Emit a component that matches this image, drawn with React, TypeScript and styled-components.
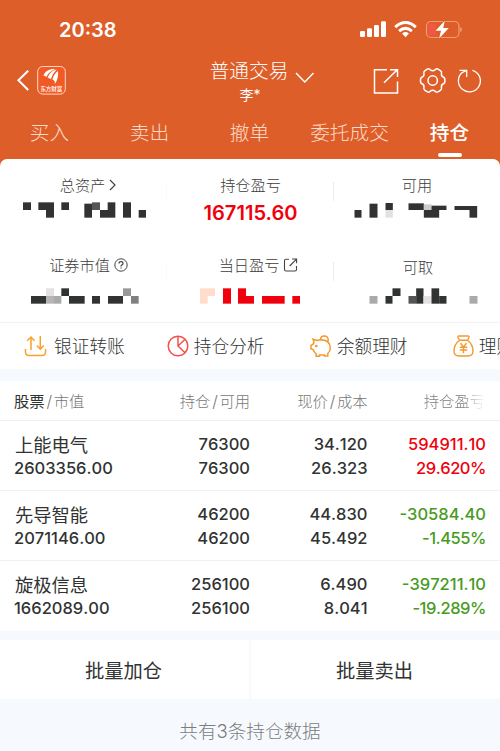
import React from "react";
import styled, { createGlobalStyle } from "styled-components";

const ORANGE = "#de5e29";
const INK = "#303332";
const RED = "#f0000c";
const GREEN = "#479b22";

const Global = createGlobalStyle`
  * { box-sizing: border-box; }
  body { margin: 0; background: #f6faff; }
`;

const Screen = styled.div`
  width: 500px;
  height: 751px;
  overflow: hidden;
  display: flex;
  flex-direction: column;
  background: #f6faff;
  color: ${INK};
  font-family: Inter, "Noto Sans CJK SC", sans-serif;
  white-space: nowrap;
`;

const Header = styled.header`
  height: 159px;
  flex: none;
  background: ${ORANGE};
  color: #fff;
`;

const StatusBar = styled.div`
  height: 60px;
  padding: 0 38px 0 59px;
  display: flex;
  justify-content: space-between;
`;

const Clock = styled.div`
  margin-top: 18px;
  font-size: 20px;
  line-height: 24px;
  font-weight: 600;
`;

const StatusIcons = styled.svg`
  width: 103px;
  height: 20px;
  margin-top: 19px;
`;

const NavBar = styled.div`
  height: 50px;
  display: grid;
  grid-template-columns: 167px 1fr 167px;
`;

const NavLeft = styled.div`
  padding: 6px 0 0 16px;
  display: flex;
  align-items: flex-start;
`;

const BackIcon = styled.svg`
  width: 14px;
  height: 22px;
  margin-top: 4px;
`;

const Logo = styled.svg`
  width: 30px;
  height: 30px;
  margin-left: 7px;
`;

const NavTitle = styled.div`
  display: flex;
  flex-direction: column;
  align-items: center;
`;

const TitleRow = styled.div`
  display: flex;
  align-items: center;
  gap: 7px;
  height: 24px;
  line-height: 26px;
  padding-left: 25px;
  font-size: 19.7px;
  font-weight: 300;
`;

const TitleText = styled.span`
  height: 28px;
`;

const TitleArrow = styled.svg`
  width: 20px;
  height: 14px;
  margin-top: 10px;
`;

const Subtitle = styled.div`
  font-size: 14px;
  line-height: 20px;
  margin-top: 1px;
`;

const Tabs = styled.nav`
  height: 49px;
  display: grid;
  grid-template-columns: repeat(5, 100px);
`;

const Tab = styled.div<{ $active?: boolean }>`
  display: flex;
  flex-direction: column;
  align-items: center;
  justify-content: space-between;
  padding: 8px 0 2px;
  font-size: 19.7px;
  line-height: 30px;
  font-weight: ${(p) => (p.$active ? 500 : 300)};
  color: ${(p) => (p.$active ? "#fff" : "#fbdac6")};
`;

const TabLabel = styled.span`
  padding-right: 1px;
`;

const TabMark = styled.span`
  width: 24px;
  height: 4px;
  border-radius: 2px;
  background: #fff;
`;

const HeaderIcons = styled.svg`
  width: 120px;
  height: 30px;
  margin: 6px 0 0 36px;
`;

const Panel = styled.section`
  height: 210px;
  flex: none;
  background: linear-gradient(${ORANGE} 0 12px, #fff 12px);
`;

const PanelBody = styled.div`
  height: 100%;
  background: #fff;
  border-radius: 7px 7px 0 0;
`;

const Summary = styled.div`
  height: 163px;
  display: grid;
  grid-template-columns: 167px 167px 166px;
  grid-template-rows: 80px 83px;
`;

const Metric = styled.div<{ $rule?: string; $drop?: number }>`
  display: flex;
  flex-direction: column;
  align-items: center;
  padding-top: ${(p) => 13 + (p.$drop ?? 0)}px;
  background: linear-gradient(${(p) => p.$rule ?? "transparent"} 0 0) right 23px / 1px 19px no-repeat;
`;

const MetricLabel = styled.div<{ $indent?: number }>`
  display: flex;
  align-items: center;
  gap: 4px;
  height: 24px;
  padding-left: ${(p) => p.$indent ?? 0}px;
  font-size: 15.2px;
  font-weight: 300;
  color: #3c3c3c;
`;

const MetricValue = styled.div`
  font-size: 20.1px;
  line-height: 24px;
  font-weight: 600;
  margin-top: 5px;
  color: ${RED};
`;

const MosaicSvg = styled.svg<{ $top: number }>`
  width: 167px;
  height: 16px;
  flex: none;
  margin-top: ${(p) => p.$top}px;
`;

const Actions = styled.div`
  height: 47px;
  border-top: 1px solid #f3f3f5;
  display: grid;
  grid-template-columns: 143.3px 143px 143px 143px;
  overflow: hidden;
`;

const Action = styled.div<{ $gap?: number }>`
  display: flex;
  align-items: center;
  gap: ${(p) => p.$gap ?? 4.5}px;
  padding-left: 24px;
  font-size: 17.7px;
  font-weight: 300;
`;

const ActionLabel = styled.span`
  padding-bottom: 3px;
`;

const Icon = styled.svg<{ $w: number; $h: number }>`
  width: ${(p) => p.$w}px;
  height: ${(p) => p.$h}px;
  flex: none;
`;

/* Label-sized glyphs sit slightly below the centre of the text line. */
const LabelIcon = styled(Icon)`
  margin-top: 1px;
`;

const Table = styled.section`
  margin-top: 12px;
  height: 250px;
  flex: none;
  background: #fff;
`;

const columns = `
  display: grid;
  grid-template-columns: 130px 106px 117.5px 118.5px;
  padding: 0 14px;
`;

const TableHead = styled.div`
  ${columns}
  height: 40px;
  align-items: center;
  padding-bottom: 2px;
  border-bottom: 1px solid #f6eaec;
  font-size: 15.3px;
  font-weight: 300;
  color: #777;
`;

const HeadCell = styled.div<{ $left?: boolean; $fade?: boolean }>`
  text-align: ${(p) => (p.$left ? "left" : "right")};
  ${(p) =>
    p.$fade &&
    `padding-right: 1px;
     background: linear-gradient(90deg, #777 80%, #f4f4f4 98%);
     background-clip: text; -webkit-background-clip: text; color: transparent;`}
`;

const Strong = styled.span`
  font-weight: 400;
  color: ${INK};
`;

const Slash = styled.span`
  margin: 0 1.5px 0 2px;
  font-size: 16px;
`;

const Row = styled.div`
  ${columns}
  height: 70px;
  padding-top: 11px;
  border-bottom: 1px solid #f6f0f2;
  &:last-child { border-bottom: 0; }
`;

const Cell = styled.div<{ $tone?: string }>`
  display: flex;
  flex-direction: column;
  align-items: flex-end;
  font-size: 16.5px;
  line-height: 24px;
  font-weight: 500;
  font-kerning: none;
  color: ${(p) => p.$tone ?? INK};
`;

const Rate = styled.span`
  letter-spacing: -0.45px;
`;

const StockCell = styled(Cell)`
  align-items: flex-start;
`;

const StockName = styled.span`
  height: 24px;
  padding-left: 1px;
  font-size: 18.3px;
  line-height: 26px;
  font-weight: 400;
`;

const Batch = styled.div`
  margin-top: 9px;
  height: 59px;
  flex: none;
  display: grid;
  grid-template-columns: 1fr 1fr;
  gap: 2px;
`;

const BatchButton = styled.button`
  border: 0;
  padding: 2px 2px 0 0;
  background: #fff;
  font: 400 19.3px/28px Inter, "Noto Sans CJK SC", sans-serif;
  color: ${INK};
`;

const Footer = styled.footer`
  padding-top: 18px;
  text-align: center;
  font-size: 18.6px;
  line-height: 28px;
  font-weight: 300;
  color: #7c7c7c;
`;

type Block = [x: number, y: number, w: number, h: number, fill?: string];

/* Masked amounts: blocks are given in thirds of a pixel. */
const Mosaic = ({ x, top, blocks }: { x: number; top: number; blocks: Block[] }) => (
  <MosaicSvg $top={top} viewBox={`${x} 0 501 48`}>
    {blocks.map(([bx, by, w, h, fill], i) => (
      <rect key={i} x={bx} y={by} width={w} height={h} fill={fill ?? INK} />
    ))}
  </MosaicSvg>
);

const PALE = "#e4e0e4";
const PEACH = "#ffdccb";

const assets: Block[] = [
  [69, 1, 24, 23], [115, 1, 47, 23], [138, 24, 24, 23], [184, 1, 23, 23],
  [253, 5, 23, 42], [276, 1, 24, 23, "#555"], [300, 24, 46, 23], [323, 1, 23, 23],
  [369, 1, 24, 46], [416, 24, 22, 23],
];
const available: Block[] = [
  [1062, 24, 21, 23], [1107, 5, 24, 42], [1155, 3, 22, 21], [1155, 24, 22, 23, PALE],
  [1224, 4, 46, 20], [1270, 7, 23, 17, "#ccc"], [1270, 24, 46, 23], [1293, 11, 45, 13],
  [1362, 12, 68, 12], [1407, 24, 23, 23],
];
const market: Block[] = [
  [93, 24, 45, 23], [138, 1, 24, 23, PALE], [138, 24, 24, 23, "#b5b5b5"], [162, 24, 22, 23, "#aaa8aa"],
  [184, 1, 23, 23], [207, 24, 47, 23], [276, 24, 24, 23], [324, 24, 45, 23],
  [369, 1, 24, 23, "#999"], [393, 24, 23, 23, "#808080"],
];
const today: Block[] = [
  [600, 1, 45, 23, PEACH], [600, 24, 23, 23, PEACH], [669, 1, 24, 46, RED], [714, 1, 24, 46, RED],
  [738, 24, 24, 23, RED], [786, 24, 68, 23, RED], [877, 24, 23, 23, RED],
];
const drawable: Block[] = [
  [1107, 24, 24, 23, "#aaa"], [1155, 24, 21, 23], [1176, 1, 24, 23], [1224, 24, 23, 23, "#555"],
  [1247, 1, 22, 46], [1269, 24, 24, 23, PALE], [1293, 1, 23, 46], [1316, 24, 22, 23],
  [1407, 24, 24, 23, "#aaa"],
];

const holdings = [
  { name: "上能电气", value: "2603356.00", held: "76300", usable: "76300", price: "34.120", cost: "26.323", profit: "594911.10", rate: "29.620%", tone: RED },
  { name: "先导智能", value: "2071146.00", held: "46200", usable: "46200", price: "44.830", cost: "45.492", profit: "-30584.40", rate: "-1.455%", tone: GREEN },
  { name: "旋极信息", value: "1662089.00", held: "256100", usable: "256100", price: "6.490", cost: "8.041", profit: "-397211.10", rate: "-19.289%", tone: GREEN },
];

const LogoText = styled.text`
  font: 500 5.6px "Noto Sans CJK SC", sans-serif;
  fill: #fff;
`;

export default function App() {
  return (
    <Screen>
      <Global />
      <Header>
        <StatusBar>
          <Clock>20:38</Clock>
          <StatusIcons viewBox="359 19 103 20" fill="#fff">
            <rect x="360" y="31" width="5" height="6" rx="1.3" />
            <rect x="367" y="28.3" width="5" height="8.7" rx="1.3" />
            <rect x="374" y="25" width="5" height="12" rx="1.3" />
            <rect x="381" y="21.3" width="5" height="15.7" rx="1.3" />
            <g fill="none" stroke="#fff" strokeWidth="3">
              <path d="M395.2 27.2Q405.5 17.9 415.8 27.2" />
              <path d="M399.1 31.1Q405.5 25.6 411.9 31.1" />
            </g>
            <path d="M402.1 33.5Q405.5 30.6 408.9 33.5L405.5 37.2Z" />
            <rect x="426.5" y="21.5" width="32.5" height="16" rx="4.5" fill="none" stroke="#ee9d79" strokeWidth="1.2" />
            <path d="M460.3 27v5q1.5-.7 1.5-2.5t-1.5-2.5Z" fill="#efa98b" />
            <rect x="428" y="23.5" width="8" height="12" rx="2" fill="#f25746" />
            <path d="M444.8 20.7L435.5 30.8H441L439.1 38.5L448.8 28.1H443.2Z" stroke={ORANGE} strokeWidth="1.5" paintOrder="stroke" />
          </StatusIcons>
        </StatusBar>
        <NavBar>
          <NavLeft>
            <BackIcon viewBox="16 70 14 22" fill="none" stroke="#fff" strokeWidth="2">
              <path d="M28.2 70.7L18.4 80.3L28.2 90" />
            </BackIcon>
            <Logo viewBox="37 66 30 30">
              <rect x="37.7" y="66.5" width="27.6" height="27.6" rx="5" fill="#f25a25" stroke="#ffd8c5" />
              <path d="M43.5 75.5C45 70.8 50 68.6 55.2 69.1C51 70.8 48.2 73.4 46.5 76.7ZM47.7 77.8C49.2 73.5 52.3 70.3 56.8 69.5C54.3 72.2 52.1 75.2 51 78.9ZM52.4 79.6C53.5 75.7 55.4 72.6 58 71C58.6 75.8 57.5 80.5 54.7 84.2C55.2 81.8 54.7 80.3 52.4 79.6Z" fill="#fff" />
              <LogoText x="40.4" y="91" textLength="22">东方财富</LogoText>
            </Logo>
          </NavLeft>
          <NavTitle>
            <TitleRow>
              <TitleText>普通交易</TitleText>
              <TitleArrow viewBox="0 0 20 14" fill="none" stroke="#fff" strokeWidth="1.5">
                <path d="M1 3L9.8 12L18.5 3" />
              </TitleArrow>
            </TitleRow>
            <Subtitle>李*</Subtitle>
          </NavTitle>
          <HeaderIcons viewBox="369 66 120 30" fill="none" stroke="#fff" strokeWidth="1.5">
            <path d="M387 69.7H374.5V93H397.5V81.5M390 69.7H397.5V77M384 82.8L397 70" />
            <circle cx="432.7" cy="80.5" r="4.7" />
            <path d="M426.5 69.7Q428.5 67.9 430.3 69.8Q432.7 71.6 435.1 69.8Q436.9 67.9 438.9 69.7L440.7 70.8Q442 71.6 441.4 74Q441.3 76.4 443.5 77.2Q445 77.7 444.9 80.5Q445 83.3 443.5 83.8Q441.3 84.6 441.4 87Q442 89.4 440.7 90.2L438.9 91.3Q436.9 93.1 435.1 91.2Q432.7 89.4 430.3 91.2Q428.5 93.1 426.5 91.3L424.7 90.2Q423.4 89.4 424 87Q424.1 84.6 421.9 83.8Q420.4 83.3 420.5 80.5Q420.4 77.7 421.9 77.2Q424.1 76.4 424 74Q423.4 71.6 424.7 70.8Z" />
            <path d="M472.4 70.3A11 11 0 1 1 462.5 72.3L466.5 70.5M459.5 70.3H466.7V77" strokeWidth="1.3" />
          </HeaderIcons>
        </NavBar>
        <Tabs>
          <Tab><TabLabel>买入</TabLabel></Tab>
          <Tab><TabLabel>卖出</TabLabel></Tab>
          <Tab><TabLabel>撤单</TabLabel></Tab>
          <Tab><TabLabel>委托成交</TabLabel></Tab>
          <Tab $active>
            <TabLabel>持仓</TabLabel>
            <TabMark />
          </Tab>
        </Tabs>
      </Header>

      <Panel>
        <PanelBody>
          <Summary>
            <Metric $rule="#fafafa">
              <MetricLabel $indent={9}>
                总资产
                <LabelIcon $w={7} $h={12} viewBox="0 0 7 12" fill="none" stroke="#444" strokeWidth="1.2">
                  <path d="M1 1L6 6L1 11" />
                </LabelIcon>
              </MetricLabel>
              <Mosaic x={0} top={6} blocks={assets} />
            </Metric>
            <Metric $rule="#ededed">
              <MetricLabel>持仓盈亏</MetricLabel>
              <MetricValue>167115.60</MetricValue>
            </Metric>
            <Metric>
              <MetricLabel>可用</MetricLabel>
              <Mosaic x={1000.5} top={6} blocks={available} />
            </Metric>
            <Metric $rule="#fafafa">
              <MetricLabel $indent={10}>
                证券市值
                <LabelIcon $w={14} $h={14} viewBox="0 0 14 14" fill="none" stroke="#444">
                  <circle cx="7" cy="7" r="6.2" />
                  <path d="M5 5.5Q5 3.7 7 3.7T9 5.4Q9 6.4 7.8 7Q7 7.5 7 8.4M7 9.5V10.6" strokeWidth="1.2" />
                </LabelIcon>
              </MetricLabel>
              <Mosaic x={0} top={12} blocks={market} />
            </Metric>
            <Metric $rule="#ededed">
              <MetricLabel $indent={16}>
                当日盈亏
                <LabelIcon $w={15} $h={14} viewBox="0 0 15 14" fill="none" stroke="#444" strokeWidth="1.1">
                  <path d="M6 1.3H3Q1.5 1.3 1.5 2.8V11.5Q1.5 13 3 13H12Q13.5 13 13.5 11.5V8M9 1H13.6V5.2M6.7 8L13.5 1.2" />
                </LabelIcon>
              </MetricLabel>
              <Mosaic x={501} top={12} blocks={today} />
            </Metric>
            <Metric $drop={2}>
              <MetricLabel $indent={2}>可取</MetricLabel>
              <Mosaic x={1000.5} top={10} blocks={drawable} />
            </Metric>
          </Summary>
          <Actions>
            <Action $gap={7}>
              <Icon $w={23} $h={22} viewBox="0 0 23 22" fill="none" stroke="#f9a12a" strokeWidth="1.5">
                <path d="M1.5 14V17Q1.5 20.5 5 20.5H18Q21.5 20.5 21.5 17V14M7 15V2M3.2 5.8L7 2L10.5 5.8M16.3 1V14.2M12.8 10.5L16.3 14.2L19.8 10.5" />
              </Icon>
              <ActionLabel>银证转账</ActionLabel>
            </Action>
            <Action>
              <Icon $w={22} $h={22} viewBox="0 0 22 22" fill="none" stroke="#f0524b" strokeWidth="1.5">
                <circle cx="11" cy="11" r="9.8" />
                <path d="M11 1.2V11L18 17.7M11 11L17.8 4.5" />
              </Icon>
              <ActionLabel>持仓分析</ActionLabel>
            </Action>
            <Action>
              <Icon $w={22} $h={23} viewBox="0 0 22 23" fill="none" stroke="#f5982c" strokeWidth="1.5">
                <path d="M3 4.2L7 5.5Q9 4.8 11.5 4.8Q20.3 5.5 20.3 13Q20.3 16.5 17.8 18.5V21H14.5V20H9.5V21.2H6.2V18.8Q4 17.3 3.3 14.8L1 13.8V10.2L3 9.4Q3.2 8.3 4 7.4ZM10.5 4.8Q10.5 1 14.3 1T18.2 5Q18.2 6.7 17 7.4" />
                <circle cx="6.3" cy="11" r=".6" fill="#f5982c" />
              </Icon>
              <ActionLabel>余额理财</ActionLabel>
            </Action>
            <Action>
              <Icon $w={21} $h={22} viewBox="0 0 21 22" fill="none" stroke="#f5982c" strokeWidth="1.4">
                <path d="M6.2 4.6L5 2.5Q4.5 1 6 1H15Q16.5 1 16 2.5L14.8 4.6M6 5.3H15M6.2 5.5Q1 9.5 1 16Q1 21 6 21H15Q20 21 20 16Q20 9.5 14.8 5.5M7.5 8.3L10.5 12L13.5 8.3M6.8 12.2H14.2M6.8 15H14.2M10.5 12V18.2" />
              </Icon>
              <ActionLabel>理财</ActionLabel>
            </Action>
          </Actions>
        </PanelBody>
      </Panel>

      <Table>
        <TableHead>
          <HeadCell $left><Strong>股票</Strong><Slash>/</Slash>市值</HeadCell>
          <HeadCell>持仓<Slash>/</Slash>可用</HeadCell>
          <HeadCell>现价<Slash>/</Slash>成本</HeadCell>
          <HeadCell $fade>持仓盈亏</HeadCell>
        </TableHead>
        {holdings.map((h) => (
          <Row key={h.name}>
            <StockCell><StockName>{h.name}</StockName><span>{h.value}</span></StockCell>
            <Cell><span>{h.held}</span><span>{h.usable}</span></Cell>
            <Cell><span>{h.price}</span><span>{h.cost}</span></Cell>
            <Cell $tone={h.tone}><span>{h.profit}</span><Rate>{h.rate}</Rate></Cell>
          </Row>
        ))}
      </Table>

      <Batch>
        <BatchButton>批量加仓</BatchButton>
        <BatchButton>批量卖出</BatchButton>
      </Batch>
      <Footer>共有3条持仓数据</Footer>
    </Screen>
  );
}
